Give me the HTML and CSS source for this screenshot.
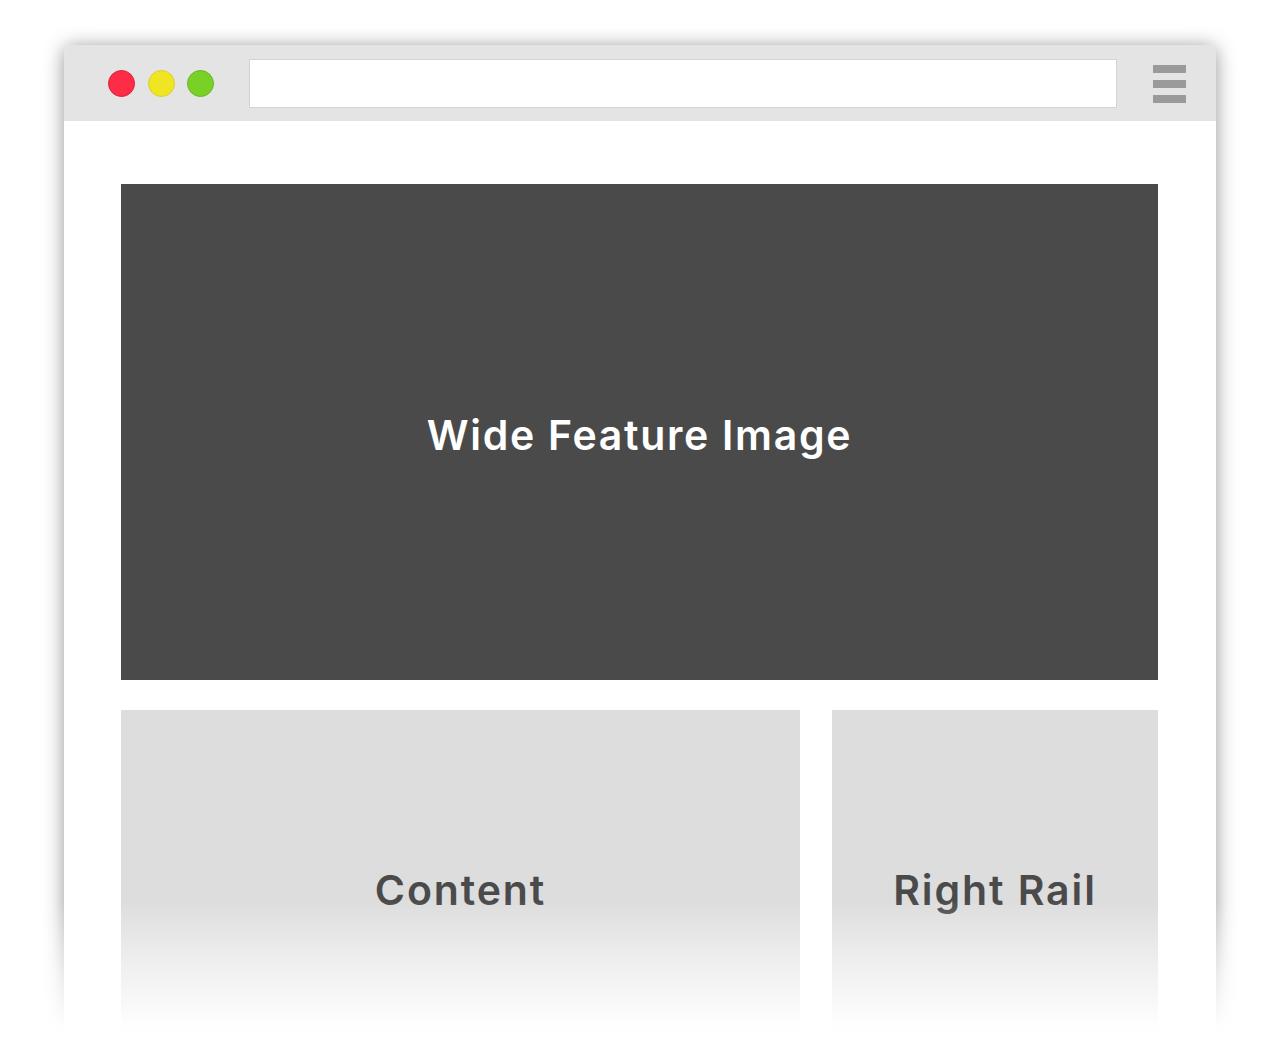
FILE: index.html
```html
<!DOCTYPE html>
<html>
<head>
<meta charset="utf-8">
<link rel="stylesheet" href="styles.css">
</head>
<body>
<div class="stage">
  <div class="window">
    <div class="toolbar">
      <div class="dots">
        <span class="dot red"></span>
        <span class="dot yellow"></span>
        <span class="dot green"></span>
      </div>
      <div class="address"></div>
      <div class="menu">
        <span></span><span></span><span></span>
      </div>
    </div>
    <div class="page">
      <div class="feature">Wide Feature Image</div>
      <div class="row">
        <div class="panel content">Content</div>
        <div class="panel rail">Right Rail</div>
      </div>
    </div>
  </div>
  <div class="fade"></div>
</div>
</body>
</html>
```

FILE: styles.css
```css
html, body {
  margin: 0;
  padding: 0;
  background: #fff;
  overflow: hidden;
}
.stage {
  position: relative;
  width: 1280px;
  height: 1057px;
  overflow: hidden;
  padding-top: 45px;
  box-sizing: border-box;
}
.window {
  width: 1152px;
  margin-left: 64px;
  border-radius: 8px 8px 0 0;
  background: #fff;
  box-shadow: 0 2px 20px rgba(0,0,0,0.42);
  overflow: hidden;
}
.toolbar {
  height: 76px;
  background: #e4e4e4;
  display: flex;
  align-items: center;
  box-sizing: border-box;
  padding-left: 44px;
}
.dots {
  display: flex;
  gap: 12.5px;
  margin-top: 1px;
}
.dot {
  width: 27px;
  height: 27px;
  border-radius: 50%;
  box-sizing: border-box;
}
.red { background: #fe2c46; border: 1px solid #d91f39; }
.yellow { background: #efe523; border: 1px solid #d8cf2a; }
.green { background: #7ad126; border: 1px solid #68b522; }
.address {
  margin-left: 35px;
  width: 868px;
  height: 49px;
  background: #fff;
  border: 1px solid #d4d4d4;
  box-sizing: border-box;
  margin-top: 1px;
}
.menu {
  margin-left: 36px;
  display: flex;
  flex-direction: column;
  gap: 7px;
  margin-top: 1px;
}
.menu span {
  display: block;
  width: 33px;
  height: 8px;
  background: #9a9a9a;
}
.page {
  padding: 63px 58px 0 57px;
  height: 1000px;
}
.feature {
  height: 496px;
  background: #4a4a4a;
  color: #fff;
  display: flex;
  align-items: center;
  justify-content: center;
  font-family: Inter, "DejaVu Sans", sans-serif;
  font-weight: 600;
  font-size: 41px;
  letter-spacing: 1.7px;
  padding-top: 6px;
  box-sizing: border-box;
}
.row {
  display: flex;
  gap: 32px;
  margin-top: 30px;
}
.panel {
  height: 360px;
  background: #dddddd;
  color: #4a4a4a;
  display: flex;
  align-items: center;
  justify-content: center;
  font-family: Inter, "DejaVu Sans", sans-serif;
  font-weight: 600;
  font-size: 41px;
  letter-spacing: 1.9px;
}
.content { width: 679px; }
.rail { width: 326px; }
.fade {
  position: absolute;
  left: 0;
  right: 0;
  top: 900px;
  height: 157px;
  background: linear-gradient(to bottom, rgba(255,255,255,0) 0px, rgba(255,255,255,0.5) 60px, rgba(255,255,255,0.97) 125px, #fff 140px);
}
```
